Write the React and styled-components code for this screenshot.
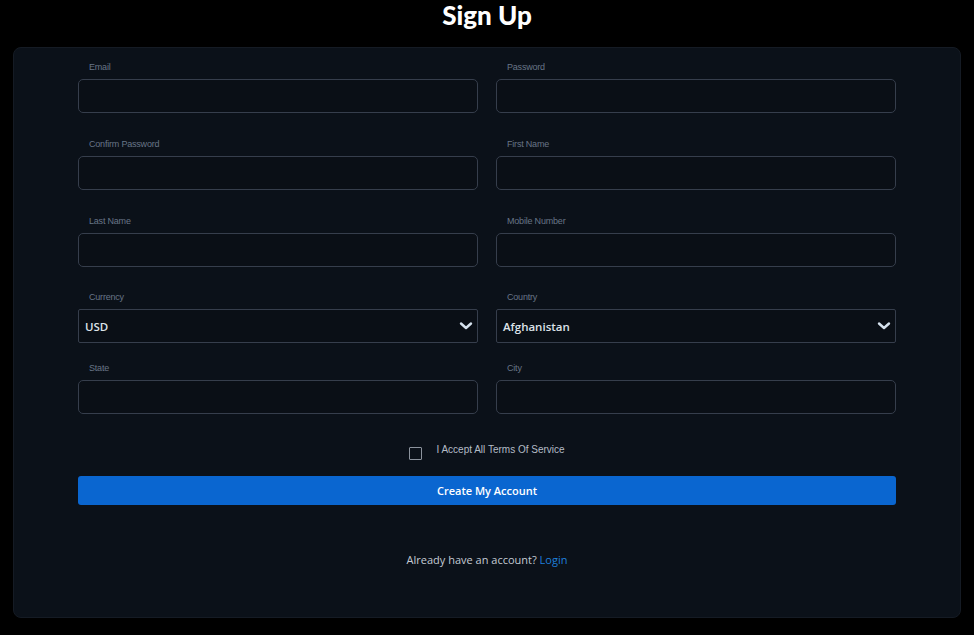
import styled, { createGlobalStyle } from "styled-components";

const GlobalStyle = createGlobalStyle`
  * {
    box-sizing: border-box;
  }

  body {
    margin: 0;
    background: #000000;
    font-family: "Open Sans", "Liberation Sans", sans-serif;
  }
`;

const Page = styled.div`
  width: 974px;
  height: 635px;
  display: flex;
  flex-direction: column;
  background: #000000;
`;

const Title = styled.h1`
  margin: 0;
  height: 47px;
  padding-top: 0;
  text-align: center;
  font-family: "Lato", "Open Sans", sans-serif;
  font-weight: 900;
  font-size: 26px;
  line-height: 31px;
  color: #ffffff;
`;

const Card = styled.div`
  margin: 0 13px;
  height: 571px;
  padding: 13px 64px 0 64px;
  background: #0b1119;
  border: 1px solid #151b24;
  border-radius: 8px;
  display: flex;
  flex-direction: column;
`;

const FieldGrid = styled.div`
  display: grid;
  grid-template-columns: 400px 400px;
  column-gap: 18px;
`;

const Field = styled.div`
  display: flex;
  flex-direction: column;
  gap: 6px;
  padding-bottom: ${(props) => props.$spacing}px;
`;

const Label = styled.label`
  padding-left: 11px;
  font-family: "Liberation Sans", Arial, sans-serif;
  font-size: 9px;
  line-height: 12px;
  letter-spacing: -0.2px;
  color: #687587;
`;

const TextInput = styled.input`
  height: 34px;
  width: 100%;
  padding: 0 11px;
  background: #0a0f16;
  border: 1px solid #363e4c;
  border-radius: 5px;
  color: #d8dee6;
  font-size: 12px;
  outline: none;
`;

const SelectBox = styled.div`
  height: 34px;
  display: flex;
  align-items: center;
  justify-content: space-between;
  padding: 0 3px 0 6px;
  background: #0a0f16;
  border: 1px solid #363e4c;
  border-radius: 2px;
  color: #dde3ea;
  font-size: 11.5px;
  font-weight: 600;
`;

const TermsRow = styled.div`
  display: flex;
  justify-content: center;
  align-items: flex-start;
  gap: 14px;
  margin-top: 32px;
  height: 15px;
`;

const CheckBox = styled.span`
  width: 13px;
  height: 13px;
  margin-top: 1px;
  border: 1px solid #8c939d;
  border-radius: 1px;
`;

const TermsText = styled.span`
  font-family: "Liberation Sans", Arial, sans-serif;
  font-size: 10px;
  line-height: 12px;
  color: #b4bcc6;
  margin-top: -2px;
`;

const SubmitButton = styled.button`
  margin-top: 15px;
  height: 29px;
  width: 100%;
  border: none;
  border-radius: 3px;
  background: #0a66d0;
  color: #ffffff;
  font-family: "Open Sans", sans-serif;
  font-size: 11px;
  font-weight: 600;
`;

const LoginLine = styled.p`
  margin: 47px 0 0 0;
  text-align: center;
  font-size: 11px;
  line-height: 16px;
  color: #c4cbd4;

  > a {
    color: #1f7fdb;
    text-decoration: none;
  }
`;

const Chevron = () => (
  <svg width="16" height="10" viewBox="0 0 16 10">
    <path
      d="M3 2.5 L8 7 L13 2.5"
      fill="none"
      stroke="#d6e2ee"
      strokeWidth="2.4"
      strokeLinecap="round"
      strokeLinejoin="round"
    />
  </svg>
);

const fields = [
  { label: "Email", spacing: 25 },
  { label: "Password", spacing: 25 },
  { label: "Confirm Password", spacing: 25 },
  { label: "First Name", spacing: 25 },
  { label: "Last Name", spacing: 24 },
  { label: "Mobile Number", spacing: 24 },
  { label: "Currency", spacing: 19, select: "USD" },
  { label: "Country", spacing: 19, select: "Afghanistan" },
  { label: "State", spacing: 0 },
  { label: "City", spacing: 0 },
];

const App = () => {
  return (
    <Page>
      <GlobalStyle />
      <Title>Sign Up</Title>
      <Card>
        <FieldGrid>
          {fields.map((field) => (
            <Field key={field.label} $spacing={field.spacing}>
              <Label>{field.label}</Label>
              {field.select ? (
                <SelectBox>
                  <span>{field.select}</span>
                  <Chevron />
                </SelectBox>
              ) : (
                <TextInput type="text" />
              )}
            </Field>
          ))}
        </FieldGrid>
        <TermsRow>
          <CheckBox />
          <TermsText>I Accept All Terms Of Service</TermsText>
        </TermsRow>
        <SubmitButton>Create My Account</SubmitButton>
        <LoginLine>
          Already have an account? <a href="#">Login</a>
        </LoginLine>
      </Card>
    </Page>
  );
};

export default App;
